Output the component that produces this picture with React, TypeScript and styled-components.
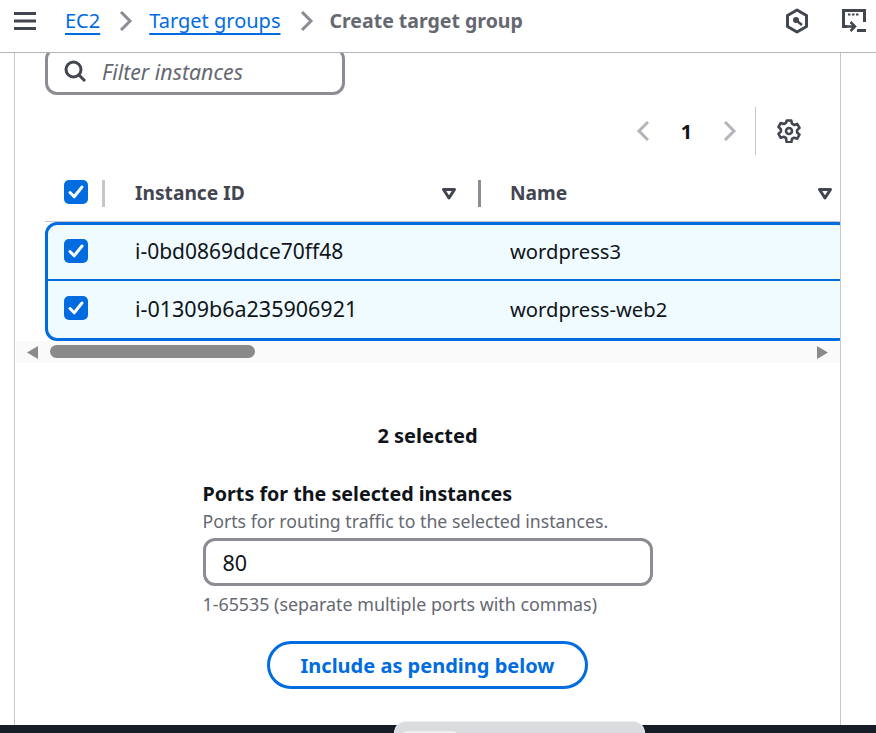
import React, { FC } from "react";
import styled, { createGlobalStyle } from "styled-components";

const GlobalStyle = createGlobalStyle`
  html, body {
    margin: 0;
    padding: 0;
    background: #fff;
  }
  * {
    box-sizing: border-box;
  }
  body {
    font-family: "Noto Sans", "Open Sans", sans-serif;
    color: #0f141a;
    overflow: hidden;
  }
`;

const Page = styled.div`
  width: 876px;
  height: 733px;
  display: flex;
  flex-direction: column;
  position: relative;
  overflow: hidden;
`;

const TopBar = styled.header`
  height: 53px;
  flex: none;
  display: flex;
  align-items: center;
  padding: 0 10px 10px 14px;
  border-bottom: 1px solid #b4b4bb;
  background: #fff;
  position: relative;
  z-index: 2;
`;

const Crumbs = styled.nav`
  display: flex;
  align-items: center;
  margin-left: 29px;
  padding-bottom: 2px;
  flex: 1;
  font-size: 20px;
`;

const CrumbLink = styled.a`
  color: #006ce0;
  text-decoration: underline;
  text-underline-offset: 5px;
  text-decoration-thickness: 2px;
`;

const CrumbCurrent = styled.span`
  color: #656871;
  font-weight: 700;
  font-size: 19.5px;
`;

const CrumbSep = styled.span`
  display: flex;
  margin: 1px 13px 0 16px;
  color: #8c8c94;
`;

const BarIcons = styled.div`
  display: flex;
  align-items: center;
  gap: 33px;
  color: #424650;
`;

const Body = styled.div`
  flex: 1;
  min-height: 0;
  padding-left: 14px;
`;

const Card = styled.main`
  width: 827px;
  height: 100%;
  border-left: 1px solid #c6c6cd;
  border-right: 1px solid #c6c6cd;
  overflow: hidden;
  display: flex;
  flex-direction: column;
`;

const TableArea = styled.section`
  padding-left: 30px;
`;

const FilterBox = styled.div`
  margin-top: -6px;
  width: 300px;
  height: 48px;
  border: 3px solid #8c8c94;
  border-radius: 12px;
  display: flex;
  align-items: center;
  gap: 16px;
  padding-left: 16px;
  color: #424650;
  font-size: 21.3px;
  font-style: italic;
`;

const FilterText = styled.span`
  color: #656871;
`;

const Pager = styled.div`
  margin-top: 12px;
  height: 48px;
  display: flex;
  align-items: center;
  justify-content: flex-end;
  padding-right: 39px;
`;

const PagerArrow = styled.span`
  display: flex;
  color: #b4b4bb;
`;

const PageNo = styled.span`
  width: 67px;
  text-align: center;
  font-size: 20px;
  font-weight: 700;
`;

const PagerRule = styled.span`
  width: 1px;
  height: 48px;
  background: #c6c6cd;
  margin: 0 21px 0 15px;
`;

const GearWrap = styled.span`
  display: flex;
  color: #424650;
`;

const Columns = styled.div`
  display: grid;
  grid-template-columns: 90px 375px 1fr;
`;

const HeadRow = styled(Columns)`
  height: 67px;
  border-bottom: 1px solid #c6c6cd;
  color: #424650;
  font-size: 19.2px;
  font-weight: 700;
`;

const HeadCheckCell = styled.div`
  padding: 25px 0 0 19px;
  display: flex;
  align-items: flex-start;
`;

const HeadCell = styled.div<{ $end?: boolean }>`
  padding: 25px ${(props) => (props.$end ? "7px" : "0")} 0 0;
  display: flex;
  align-items: flex-start;
`;

const HeadLabel = styled.span`
  flex: 1;
  line-height: 26px;
`;

const Caret = styled.span`
  display: flex;
  margin-top: 8px;
`;

const ColRule = styled.span<{ $dark?: boolean }>`
  width: 3px;
  height: 27px;
  flex: none;
  background: ${(props) => (props.$dark ? "#8c8c94" : "#c6c6cd")};
  margin: ${(props) => (props.$dark ? "0 29px 0 21px" : "0 0 0 14px")};
`;

const SelectedBox = styled.div`
  margin-right: -10px;
  border: 3px solid #006ce0;
  border-radius: 12px;
  background: #f0fbff;
`;

const BodyRow = styled(Columns)<{ $height: number }>`
  grid-template-columns: 87px 375px 1fr;
  height: ${(props) => props.$height}px;
  align-items: center;
  padding-bottom: 3px;

  & + & {
    border-top: 2px solid #006ce0;
  }
`;

const RowCheck = styled.div`
  padding-left: 16px;
  display: flex;
`;

const IdText = styled.span<{ $size: number }>`
  font-size: ${(props) => props.$size}px;
  margin-top: 1px;
`;

const NameText = styled.span`
  font-size: 20.2px;
  margin-top: 1px;
`;

const CheckBox = styled.span`
  width: 24px;
  height: 24px;
  border-radius: 5px;
  background: #006ce0;
  display: flex;
  align-items: center;
  justify-content: center;
`;

const ScrollTrack = styled.div`
  margin-left: -29px;
  height: 22px;
  background: #fafafa;
  display: flex;
  align-items: flex-start;
  padding: 4px 12px 0 11px;
`;

const ScrollArrow = styled.span`
  display: flex;
  margin-top: 1px;
`;

const ScrollThumb = styled.span`
  width: 205px;
  height: 13px;
  border-radius: 7px;
  background: #8a8a8a;
  margin: 0 auto 0 12px;
`;

const PortSection = styled.section`
  display: flex;
  flex-direction: column;
  align-items: center;
  margin-top: 58px;
`;

const SelectedCount = styled.div`
  font-size: 20px;
  font-weight: 700;
  line-height: 30px;
`;

const PortForm = styled.div`
  width: 450px;
  margin-top: 29px;
`;

const PortLabel = styled.div`
  font-size: 19.7px;
  font-weight: 700;
  line-height: 28px;
`;

const PortHint = styled.div`
  font-size: 17.7px;
  line-height: 24px;
  margin-top: 1px;
  color: #656871;
`;

const PortInput = styled.div`
  margin-top: 5px;
  height: 48px;
  border: 3px solid #8c8c94;
  border-radius: 12px;
  display: flex;
  align-items: center;
  padding-left: 17px;
  font-size: 21.5px;
`;

const PortNote = styled(PortHint)`
  margin-top: 6px;
  font-size: 17.85px;
`;

const PendingButton = styled.button`
  margin-top: 25px;
  width: 321px;
  height: 48px;
  border: 3px solid #006ce0;
  border-radius: 24px;
  background: #fff;
  color: #006ce0;
  font-family: inherit;
  font-size: 20px;
  font-weight: 700;
  padding: 0;
`;

const DarkStrip = styled.footer`
  height: 8px;
  flex: none;
  background: #161d26;
`;

const DockTab = styled.div`
  position: absolute;
  left: 394px;
  top: 721px;
  width: 251px;
  height: 12px;
  background: #dadce0;
  border: 1px solid #eceef0;
  border-bottom: none;
  border-radius: 14px 14px 0 0;
`;

const DockInner = styled.span`
  position: absolute;
  left: 8px;
  top: 9px;
  width: 54px;
  height: 4px;
  background: #eef0f2;
  border-radius: 4px 4px 0 0;
`;

const Chevron: FC<{ dir: "left" | "right" }> = ({ dir }) => (
  <svg width="20" height="20" viewBox="0 0 20 20" fill="none">
    <path
      d={dir === "right" ? "M5 1l9 9-9 9" : "M15 1l-9 9 9 9"}
      stroke="currentColor"
      strokeWidth="3"
      strokeLinejoin="miter"
    />
  </svg>
);

const CheckMark = () => (
  <CheckBox>
    <svg width="18" height="18" viewBox="0 0 18 18" fill="none">
      <path d="M3 9.5l4.2 4.3L15 4" stroke="#fff" strokeWidth="3" strokeLinecap="round" strokeLinejoin="round" />
    </svg>
  </CheckBox>
);

const SortCaret = () => (
  <Caret>
    <svg width="16" height="12" viewBox="0 0 16 12" fill="none">
      <path d="M2.5 1.5h11L8 10z" stroke="#424650" strokeWidth="3" strokeLinejoin="round" />
    </svg>
  </Caret>
);

const App: FC = () => {
  return (
    <>
      <GlobalStyle />
      <Page>
        <TopBar>
          <svg width="22" height="18" viewBox="0 0 22 18">
            <path d="M0 1.5h22M0 9h22M0 16.5h22" stroke="#424650" strokeWidth="3" />
          </svg>
          <Crumbs>
            <CrumbLink>EC2</CrumbLink>
            <CrumbSep>
              <Chevron dir="right" />
            </CrumbSep>
            <CrumbLink>Target groups</CrumbLink>
            <CrumbSep>
              <Chevron dir="right" />
            </CrumbSep>
            <CrumbCurrent>Create target group</CrumbCurrent>
          </Crumbs>
          <BarIcons>
            <svg width="24" height="26" viewBox="0 0 24 26" fill="none">
              <path d="M12 2l9.5 5.5v11L12 24l-9.5-5.5v-11z" stroke="currentColor" strokeWidth="3" strokeLinejoin="round" />
              <circle cx="11" cy="12" r="3" fill="currentColor" />
              <path d="M12 13l5 4" stroke="currentColor" strokeWidth="2.5" />
            </svg>
            <svg width="24" height="24" viewBox="0 0 24 24" fill="none">
              <path d="M5 17.5H1.5v-16h21V13" stroke="currentColor" strokeWidth="3" />
              <path d="M6 5.5h2.5M10 5.5h2.5M14 5.5h2.5" stroke="currentColor" strokeWidth="2" />
              <path d="M4 17.5h8M8.5 13l4.5 4.5-4.5 4.5" stroke="currentColor" strokeWidth="2.5" />
              <path d="M15 21.5h9" stroke="currentColor" strokeWidth="3" />
            </svg>
          </BarIcons>
        </TopBar>
        <Body>
          <Card>
            <TableArea>
              <FilterBox>
                <svg width="22" height="22" viewBox="0 0 22 22" fill="none">
                  <circle cx="9.5" cy="9.5" r="7.5" stroke="currentColor" strokeWidth="3" />
                  <path d="M15 15l6 6" stroke="currentColor" strokeWidth="3" />
                </svg>
                <FilterText>Filter instances</FilterText>
              </FilterBox>
              <Pager>
                <PagerArrow>
                  <Chevron dir="left" />
                </PagerArrow>
                <PageNo>1</PageNo>
                <PagerArrow>
                  <Chevron dir="right" />
                </PagerArrow>
                <PagerRule />
                <GearWrap>
                  <svg width="24" height="24" viewBox="0 0 24 24" fill="none">
                    <path
                      d="M9.7 1.5h4.6l.7 3.2 2.1 1.2 3.1-1 2.3 4-2.4 2.2v2.4l2.4 2.2-2.3 4-3.1-1-2.1 1.2-.7 3.3H9.7L9 19l-2.1-1.2-3.1 1-2.3-4 2.4-2.2v-2.4L1.5 8l2.3-4 3.1 1L9 3.8z"
                      stroke="currentColor"
                      strokeWidth="2.6"
                      strokeLinejoin="round"
                    />
                    <circle cx="12" cy="12" r="3" stroke="currentColor" strokeWidth="2.6" />
                  </svg>
                </GearWrap>
              </Pager>
              <HeadRow>
                <HeadCheckCell>
                  <CheckMark />
                  <ColRule />
                </HeadCheckCell>
                <HeadCell>
                  <HeadLabel>Instance ID</HeadLabel>
                  <SortCaret />
                  <ColRule $dark />
                </HeadCell>
                <HeadCell $end>
                  <HeadLabel>Name</HeadLabel>
                  <SortCaret />
                </HeadCell>
              </HeadRow>
              <SelectedBox>
                <BodyRow $height={54}>
                  <RowCheck>
                    <CheckMark />
                  </RowCheck>
                  <IdText $size={21}>i-0bd0869ddce70ff48</IdText>
                  <NameText>wordpress3</NameText>
                </BodyRow>
                <BodyRow $height={59}>
                  <RowCheck>
                    <CheckMark />
                  </RowCheck>
                  <IdText $size={21.5}>i-01309b6a235906921</IdText>
                  <NameText>wordpress-web2</NameText>
                </BodyRow>
              </SelectedBox>
              <ScrollTrack>
                <ScrollArrow>
                  <svg width="11" height="13" viewBox="0 0 11 13">
                    <path d="M11 0v13L0 6.5z" fill="#8a8a8a" />
                  </svg>
                </ScrollArrow>
                <ScrollThumb />
                <ScrollArrow>
                  <svg width="11" height="13" viewBox="0 0 11 13">
                    <path d="M0 0v13l11-6.5z" fill="#8a8a8a" />
                  </svg>
                </ScrollArrow>
              </ScrollTrack>
            </TableArea>
            <PortSection>
              <SelectedCount>2 selected</SelectedCount>
              <PortForm>
                <PortLabel>Ports for the selected instances</PortLabel>
                <PortHint>Ports for routing traffic to the selected instances.</PortHint>
                <PortInput>80</PortInput>
                <PortNote>1-65535 (separate multiple ports with commas)</PortNote>
              </PortForm>
              <PendingButton>Include as pending below</PendingButton>
            </PortSection>
          </Card>
        </Body>
        <DarkStrip />
        <DockTab>
          <DockInner />
        </DockTab>
      </Page>
    </>
  );
};

export default App;
